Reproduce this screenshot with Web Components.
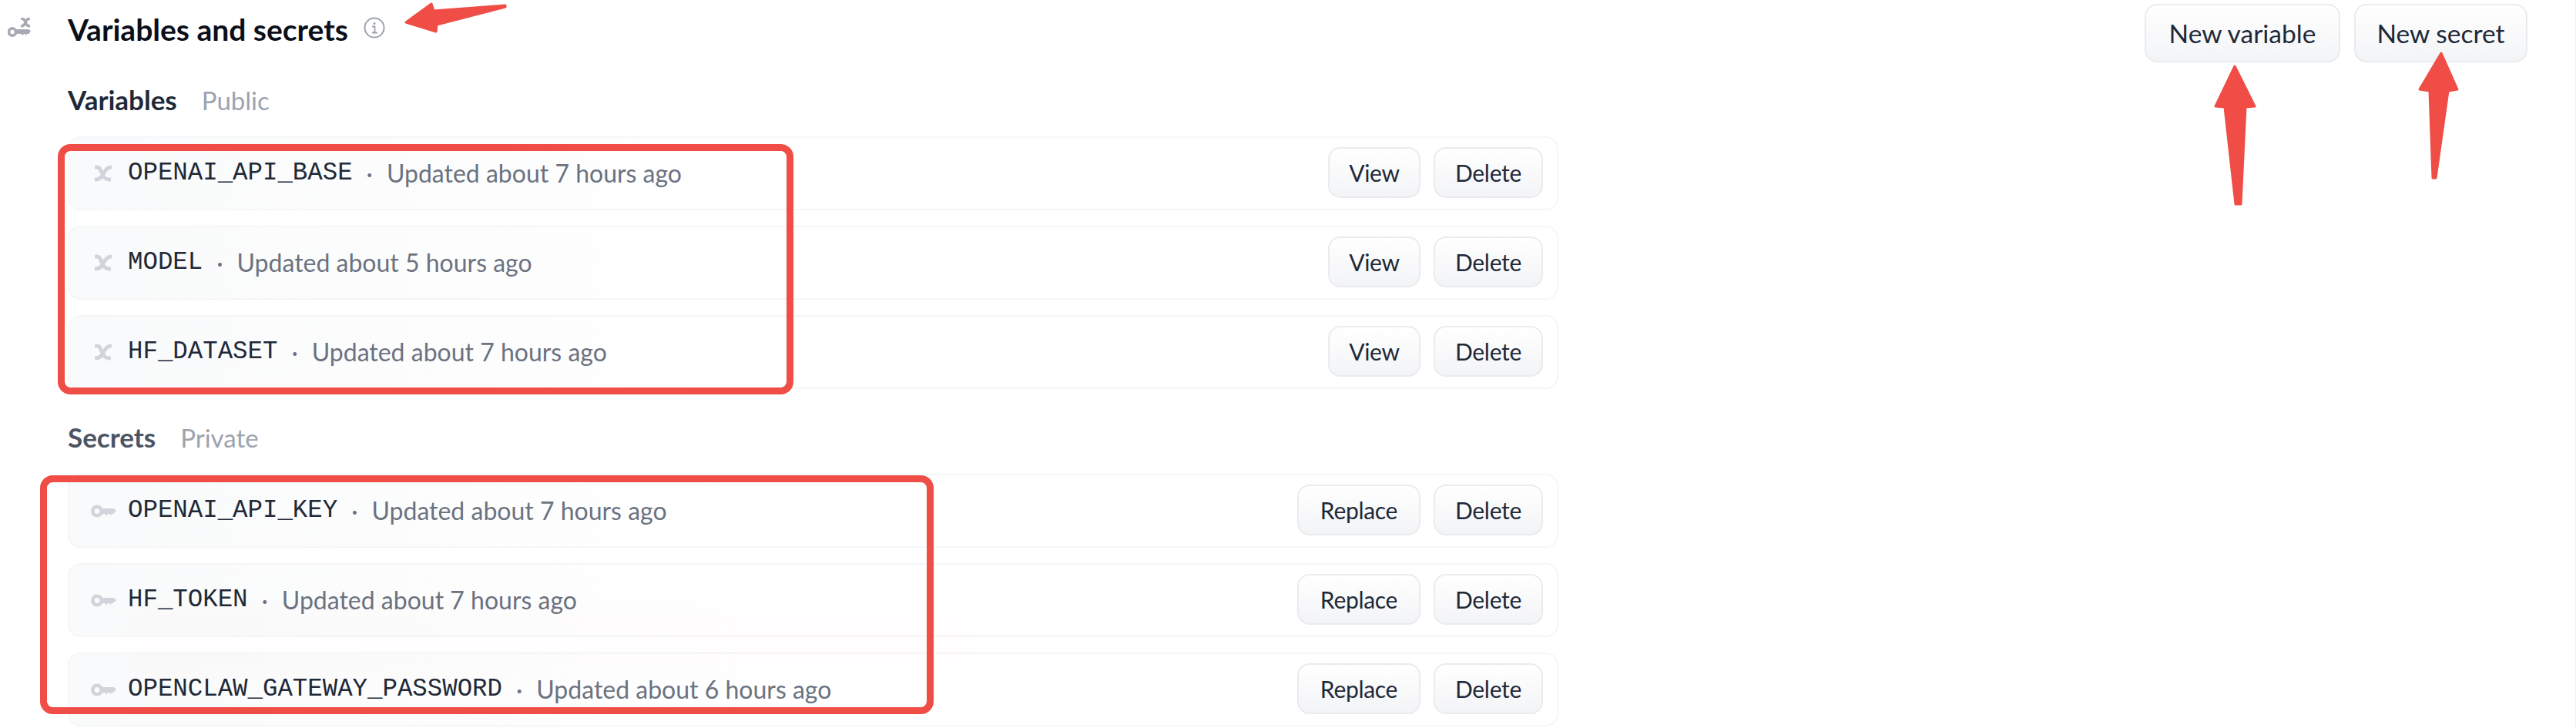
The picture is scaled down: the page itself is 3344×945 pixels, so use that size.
<!doctype html>
<html>
<head>
<meta charset="utf-8">
<title>Variables and secrets</title>
<style>
  html, body { margin: 0; background: #fff; }
  body { font-family: Lato, "Noto Sans", sans-serif; color: #111827; }
</style>
</head>
<body>
<secrets-page>
  <settings-header></settings-header>
  <settings-group label="Variables" note="Public" tone="dark" data-kind="variable"></settings-group>
  <settings-group label="Secrets" note="Private" tone="soft" data-kind="secret"></settings-group>
</secrets-page>
<note-marks></note-marks>

<script>
// ---- data ----
const ROWS = {
  variable: [
    ["OPENAI_API_BASE", "Updated about 7 hours ago"],
    ["MODEL", "Updated about 5 hours ago"],
    ["HF_DATASET", "Updated about 7 hours ago"],
  ],
  secret: [
    ["OPENAI_API_KEY", "Updated about 7 hours ago"],
    ["HF_TOKEN", "Updated about 7 hours ago"],
    ["OPENCLAW_GATEWAY_PASSWORD", "Updated about 6 hours ago"],
  ],
};

const ICON_X = `<svg viewBox="0 0 24 22" width="24" height="22" fill="none" stroke="#d1d5db" stroke-width="5">
  <path d="M1 3h3c3 0 4 2 5 5l3 6c2 4 4 5 8 5h2M23 3c-5 0-7 2-10 7l-3 5c-2 3-4 4-9 4"/></svg>`;
const ICON_KEY = `<svg viewBox="0 0 33 19" width="33" height="19" fill="none">
  <circle cx="8" cy="9.500" r="5.700" stroke="#d1d5db" stroke-width="4.600"/>
  <path d="M14 6H30L33 9 29 13H27L25.500 15 24 13H22L20 16 18 13H14z" fill="#d1d5db"/></svg>`;

class SecretsPage extends HTMLElement {
  constructor() {
    super();
    this.attachShadow({ mode: "open" }).innerHTML = `
      <style>
        :host { display: block; width: 3344px; height: 945px; box-sizing: border-box;
          overflow: hidden; border-right: 1px solid #f0f0f0; }
      </style>
      <slot></slot>`;
  }
}

class SettingsHeader extends HTMLElement {
  constructor() {
    super();
    this.attachShadow({ mode: "open" }).innerHTML = `
      <style>
        :host { display: flex; align-items: flex-start; height: 105px; padding-right: 62px; }
        .mark { width: 88px; padding: 23px 0 0 10px; box-sizing: border-box; }
        h2 { margin: 15px 0 0; font: 700 39px/46px Lato, "Noto Sans", sans-serif; color: #0b0f19; }
        .info { margin: 22px 0 0 20px; }
        .spacer { flex: 1; }
        .actions { display: flex; gap: 18px; padding-top: 5px; }
      </style>
      <div class="mark">
        <svg viewBox="0 0 30 25" width="30" height="25" fill="none">
          <path d="M17 1h1c3 0 4 2 5 5s3 5 6 5M17 11c3 0 5-2 6-5s3-5 6-5" stroke="#a8abb3" stroke-width="3.600"/>
          <circle cx="6" cy="18.500" r="4.600" stroke="#a8abb3" stroke-width="3.800"/>
          <path d="M10 15H27L30 17 27.500 21H25L24 23 22.500 21H21L19.500 23 17.500 21H10z" fill="#a8abb3"/>
        </svg>
      </div>
      <h2>Variables and secrets</h2>
      <svg class="info" viewBox="0 0 28 28" width="28" height="28" fill="none" stroke="#9ca3af">
        <circle cx="14" cy="14" r="12.500" stroke-width="2"/>
        <path d="M11 12.500h3.500V20M11 20.500h7" stroke-width="1.800"/>
        <circle cx="14" cy="8.500" r="1.500" fill="#9ca3af" stroke="none"/>
      </svg>
      <div class="spacer"></div>
      <div class="actions">
        <plain-button size="large" style="--w: 254px">New variable</plain-button>
        <plain-button size="large" style="--w: 225px">New secret</plain-button>
      </div>`;
  }
}

class SettingsGroup extends HTMLElement {
  constructor() {
    super();
    this.attachShadow({ mode: "open" }).innerHTML = `
      <style>
        :host { display: block; width: 1935px; margin-left: 88px; }
        .head { display: flex; align-items: baseline; gap: 32px; height: 72px; padding-top: 5px; box-sizing: border-box; }
        h3 { margin: 0; font: 700 35px/38px Lato, "Noto Sans", sans-serif; color: var(--head, #1f2937); }
        span { font: 400 33px/38px Lato, "Noto Sans", sans-serif; color: #9ca3af; }
        .list { display: flex; flex-direction: column; gap: 20px; margin-bottom: 38px; }
      </style>
      <div class="head"><h3></h3><span></span></div>
      <div class="list"></div>`;
  }

  connectedCallback() {
    const root = this.shadowRoot;
    root.querySelector("h3").textContent = this.getAttribute("label");
    root.querySelector("span").textContent = this.getAttribute("note");
    if (this.getAttribute("tone") === "soft") this.style.setProperty("--head", "#4b5563");

    const kind = this.dataset.kind;
    for (const [name, updated] of ROWS[kind]) {
      const row = document.createElement("settings-row");
      row.setAttribute("kind", kind);
      row.setAttribute("name", name);
      row.setAttribute("updated", updated);
      root.querySelector(".list").appendChild(row);
    }
  }
}

class SettingsRow extends HTMLElement {
  constructor() {
    super();
    this.attachShadow({ mode: "open" }).innerHTML = `
      <style>
        :host { display: flex; align-items: center; height: 96px; box-sizing: border-box;
          padding: 0 18px 0 24px; border: 2px solid #f5f6f8; border-radius: 16px;
          background: linear-gradient(to right, #f9fafb, #fff 45%); }
        .icon { width: 52px; display: flex; box-sizing: border-box; padding-left: 4px; }
        .icon.x { padding-left: 8px; }
        code { font: 400 32.400px/40px "Liberation Mono", monospace; color: #1f2937; }
        .dot { margin: 0 18px; font: 400 32px/40px Lato, sans-serif; color: #6b7280; }
        .when { font: 400 32px/40px Lato, "Noto Sans", sans-serif; color: #6b7280; }
        .spacer { flex: 1; }
        .actions { display: flex; gap: 17px; margin-top: -2px; }
      </style>
      <div class="icon"></div>
      <code></code><span class="dot">·</span><span class="when"></span>
      <div class="spacer"></div>
      <div class="actions"></div>`;
  }

  connectedCallback() {
    const root = this.shadowRoot;
    const kind = this.getAttribute("kind");
    const icon = root.querySelector(".icon");
    icon.innerHTML = kind === "secret" ? ICON_KEY : ICON_X;
    if (kind !== "secret") icon.classList.add("x");
    root.querySelector("code").textContent = this.getAttribute("name");
    root.querySelector(".when").textContent = this.getAttribute("updated");

    const first = document.createElement("plain-button");
    first.textContent = kind === "secret" ? "Replace" : "View";
    first.style.setProperty("--w", kind === "secret" ? "160px" : "120px");
    const del = document.createElement("plain-button");
    del.textContent = "Delete";
    del.style.setProperty("--w", "142px");
    root.querySelector(".actions").append(first, del);
  }
}

class PlainButton extends HTMLElement {
  constructor() {
    super();
    this.attachShadow({ mode: "open" }).innerHTML = `
      <style>
        :host { display: inline-flex; align-items: center; justify-content: center; box-sizing: border-box;
          width: var(--w, auto); height: 66px;
          border: 2px solid #e9ebee; border-radius: 16px;
          background: linear-gradient(to bottom, #fff, #f3f4f6);
          font: 400 30px/40px Lato, "Noto Sans", sans-serif; letter-spacing: -0.3px; color: #1f2937; }
        :host([size="large"]) { height: 76px; font-size: 33.5px; letter-spacing: 0; }
      </style>
      <slot></slot>`;
  }
}

// red annotations drawn on top of the screenshot, plus the faint tint the watermark leaves
class NoteMarks extends HTMLElement {
  constructor() {
    super();
    this.attachShadow({ mode: "open" }).innerHTML = `
      <style>
        :host { position: absolute; left: 0; top: 0; width: 3344px; height: 945px; pointer-events: none; overflow: hidden; }
        svg { display: block; position: absolute; left: 0; top: 0; }
        .tint { position: absolute; left: 172px; top: 790px; width: 1086px; height: 84px;
          background: rgba(235, 90, 80, 0.012); filter: blur(10px); }
      </style>
      <div class="tint"></div>
      <svg viewBox="0 0 3344 945" width="3344" height="945" fill="none">
        <g stroke="#ef4d45" stroke-width="9">
          <rect x="79.500" y="191.500" width="946" height="316" rx="12"/>
          <rect x="56.500" y="621.500" width="1151" height="301" rx="12"/>
        </g>
        <g fill="#ef4d45" stroke="#ef4d45" stroke-width="3" stroke-linejoin="round">
          <path d="M527 29 560 5 563 14 656 7 656 9 567 32 566 41z"/>
          <path d="M2901 86 2927 138 2915 139 2909 265 2902 265 2888 139 2876 138z"/>
          <path d="M3169 69 3190 116 3178 118 3162 231 3158 231 3154 118 3141 116z"/>
        </g>
      </svg>`;
  }
}

customElements.define("secrets-page", SecretsPage);
customElements.define("settings-header", SettingsHeader);
customElements.define("settings-group", SettingsGroup);
customElements.define("settings-row", SettingsRow);
customElements.define("plain-button", PlainButton);
customElements.define("note-marks", NoteMarks);
</script>
</body>
</html>
